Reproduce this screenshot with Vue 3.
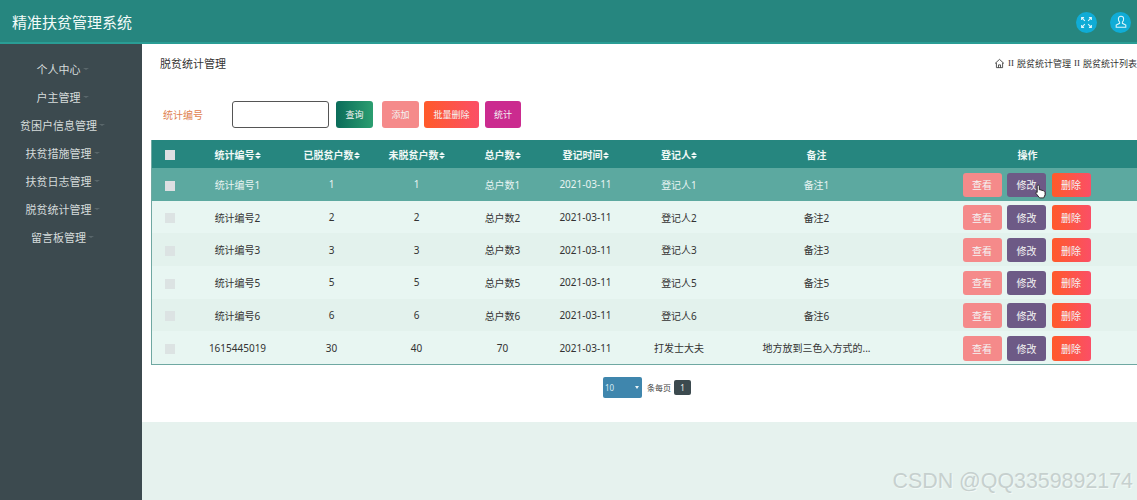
<script setup>
// 侧边栏菜单
const menus = ["个人中心", "户主管理", "贫困户信息管理", "扶贫措施管理", "扶贫日志管理", "脱贫统计管理", "留言板管理"];

const columns = ["统计编号", "已脱贫户数", "未脱贫户数", "总户数", "登记时间", "登记人"];

const rows = [
  { code: "统计编号1", done: 1, todo: 1, total: "总户数1", date: "2021-03-11", person: "登记人1", note: "备注1" },
  { code: "统计编号2", done: 2, todo: 2, total: "总户数2", date: "2021-03-11", person: "登记人2", note: "备注2" },
  { code: "统计编号3", done: 3, todo: 3, total: "总户数3", date: "2021-03-11", person: "登记人3", note: "备注3" },
  { code: "统计编号5", done: 5, todo: 5, total: "总户数5", date: "2021-03-11", person: "登记人5", note: "备注5" },
  { code: "统计编号6", done: 6, todo: 6, total: "总户数6", date: "2021-03-11", person: "登记人6", note: "备注6" },
  { code: "1615445019", done: 30, todo: 40, total: 70, date: "2021-03-11", person: "打发士大夫", note: "地方放到三色入方式的..." },
];
</script>

<template>
  <div class="page">
    <header class="topbar">
      <div class="brand">精准扶贫管理系统</div>
      <div class="top-icons">
        <span class="round-icon">
          <svg viewBox="0 0 16 16" width="13" height="13" fill="none" stroke="#dff6fb" stroke-width="1.3">
            <path d="M6 6 2 2M2 5V2h3M10 6l4-4M11 2h3v3M6 10l-4 4M2 11v3h3M10 10l4 4M14 11v3h-3" />
          </svg>
        </span>
        <span class="round-icon">
          <svg viewBox="0 0 16 16" width="14" height="14" fill="none" stroke="#dff6fb" stroke-width="1.2">
            <path d="M8 1.5c-2 0-3 1.5-3 3.2 0 1.5.6 2.7 1.4 3.5v1.3L2.5 11.5v2.5h11v-2.5L9.600 9.500V8.200c.8-.8 1.400-2 1.400-3.500 0-1.700-1-3.200-3-3.200z" />
          </svg>
        </span>
      </div>
    </header>

    <div class="body">
      <aside class="sidebar">
        <div v-for="m in menus" :key="m" class="menu-item">
          <span class="menu-text">{{ m }}<i class="caret"></i></span>
        </div>
      </aside>

      <main class="content">
        <section class="panel">
          <div class="crumb-row">
            <span class="page-title">脱贫统计管理</span>
            <span class="crumbs">
              <svg viewBox="0 0 16 16" width="11" height="11" fill="none" stroke="#333" stroke-width="1.200">
                <path d="M1.500 8 8 2l6.500 6M3.500 7v7h9V7M6.500 14v-4h3v4" />
              </svg>
              <span class="crumb-sep">II</span>
              <span>脱贫统计管理</span>
              <span class="crumb-sep">II</span>
              <span>脱贫统计列表</span>
            </span>
          </div>

          <div class="search-row">
            <label class="search-label">统计编号</label>
            <input class="search-input" type="text" />
            <button class="btn btn-query">查询</button>
            <button class="btn btn-add">添加</button>
            <button class="btn btn-batch">批量删除</button>
            <button class="btn btn-stat">统计</button>
          </div>

          <table class="grid">
            <colgroup>
              <col style="width: 36px" />
              <col style="width: 100px" />
              <col style="width: 88px" />
              <col style="width: 82px" />
              <col style="width: 90px" />
              <col style="width: 76px" />
              <col style="width: 111px" />
              <col style="width: 164px" />
              <col style="width: 258px" />
            </colgroup>
            <thead>
              <tr>
                <th><span class="check head-check"></span></th>
                <th v-for="c in columns" :key="c">
                  {{ c }}<span class="sort"><i class="up"></i><i class="down"></i></span>
                </th>
                <th>备注</th>
                <th>操作</th>
              </tr>
            </thead>
            <tbody>
              <tr v-for="(r, i) in rows" :key="r.code" :class="{ hover: i === 0, alt: i % 2 === 0 }">
                <td><span class="check"></span></td>
                <td>{{ r.code }}</td>
                <td>{{ r.done }}</td>
                <td>{{ r.todo }}</td>
                <td>{{ r.total }}</td>
                <td>{{ r.date }}</td>
                <td>{{ r.person }}</td>
                <td>{{ r.note }}</td>
                <td>
                  <div class="ops">
                    <button class="op op-view">查看</button>
                    <button class="op op-edit">修改</button>
                    <button class="op op-del">删除</button>
                  </div>
                </td>
              </tr>
            </tbody>
          </table>

          <div class="pager">
            <div class="page-size">10<i class="size-arrow"></i></div>
            <span class="per-page">条每页</span>
            <span class="page-no">1</span>
          </div>
        </section>
      </main>
    </div>

    <!-- 鼠标指针 -->
    <svg class="cursor" viewBox="0 0 12 16" width="11" height="15">
      <path d="M3.500 1c.8 0 1.200.5 1.200 1.200v4l.6-.2 4.200 1.300c1 .3 1.500 1 1.500 2v2.200L9.500 15H5L1 10c-.5-.8.300-1.600 1.200-1.100l.2.100V2.200C2.400 1.500 2.800 1 3.500 1z" fill="#fff" stroke="#222" stroke-width="1" />
    </svg>

    <div class="watermark">CSDN @QQ3359892174</div>
  </div>
</template>

<style>
html,
body {
  margin: 0;
  overflow: hidden;
}
</style>

<style scoped>
.page {
  position: relative;
  width: 1137px;
  height: 500px;
  overflow: hidden;
  display: flex;
  flex-direction: column;
  font-family: "Noto Sans", "Noto Sans CJK SC", sans-serif;
  font-size: 10px;
  color: #333;
}

/* 顶部栏 */
.topbar {
  height: 40px;
  flex-shrink: 0;
  background: #26867f;
  border-bottom: 2px solid #2a9d95;
  display: flex;
  align-items: center;
  justify-content: space-between;
  padding: 2px 6px 0 12px;
}

.brand {
  font-size: 15px;
  line-height: 20px;
  color: #f2fbf9;
}

.top-icons {
  display: flex;
  gap: 13px;
}

.round-icon {
  width: 21px;
  height: 21px;
  border-radius: 50%;
  background: #10acd6;
  display: flex;
  align-items: center;
  justify-content: center;
}

.body {
  flex: 1;
  display: flex;
  min-height: 0;
}

/* 侧边栏 */
.sidebar {
  width: 142px;
  flex-shrink: 0;
  background: #3c4a4f;
  padding-top: 11px;
  box-sizing: border-box;
}

.menu-item {
  height: 28px;
  width: 117px;
  display: flex;
  align-items: center;
  justify-content: center;
  font-size: 11px;
  color: #d6dcdc;
}

.menu-text {
  position: relative;
}

.caret {
  position: absolute;
  left: 100%;
  top: 7px;
  margin-left: 2px;
  border: 3px solid transparent;
  border-top: 2px solid #5a676b;
}

/* 内容区 */
.content {
  flex: 1;
  min-width: 0;
  background: #e6f2ee;
}

.panel {
  height: 378px;
  background: #fff;
  padding: 0 0 0 9px;
  box-sizing: border-box;
}

.crumb-row {
  height: 57px;
  display: flex;
  align-items: center;
  justify-content: space-between;
  padding: 0 0 19px 9px;
  box-sizing: border-box;
}

.page-title {
  font-size: 11px;
  color: #333;
}

.crumbs {
  display: flex;
  align-items: center;
  gap: 3px;
  font-size: 9px;
  color: #333;
  white-space: nowrap;
}

.crumb-sep {
  font-family: "Liberation Serif", serif;
}

.search-row {
  display: flex;
  align-items: center;
  height: 27px;
}

.search-label {
  width: 81px;
  padding-left: 12px;
  box-sizing: border-box;
  font-size: 10px;
  color: #e0814f;
}

.search-input {
  width: 97px;
  height: 27px;
  box-sizing: border-box;
  border: 1px solid #555;
  border-radius: 3px;
  background: #fff;
  margin: 0 7px 0 0;
}

.btn {
  height: 27px;
  border: none;
  border-radius: 3px;
  color: #f4f4f4;
  font-family: inherit;
  font-size: 9px;
  padding: 0;
}

.btn-query {
  width: 37px;
  background: linear-gradient(90deg, #0b6c5a, #2b9e70);
  margin-right: 9px;
}

.btn-add {
  width: 37px;
  background: #f58a8a;
  margin-right: 5px;
}

.btn-batch {
  width: 55px;
  background: linear-gradient(90deg, #ff5a2a, #fb4f66);
  margin-right: 6px;
}

.btn-stat {
  width: 36px;
  background: #cb2b8f;
}

/* 表格 */
.grid {
  margin-top: 12px;
  width: 1005px;
  table-layout: fixed;
  border-collapse: collapse;
  border-left: 1px solid #6fa8a2;
  border-bottom: 1px solid #6fa8a2;
  font-size: 10px;
}

.grid th {
  height: 28px;
  padding: 0;
  background: #26867f;
  color: #f0f8f6;
  font-weight: 700;
  text-align: center;
}

.grid td {
  height: 32.7px;
  padding: 0;
  text-align: center;
  color: #333;
  background: #e8f6f2;
}

.grid tr.alt td {
  background: #e3f2ed;
}

.grid tr.hover td {
  background: #5ca9a0;
  color: #e8f4f2;
}

.check {
  display: inline-block;
  width: 10px;
  height: 10px;
  vertical-align: middle;
  background: #dce3e3;
}

.head-check,
.hover .check {
  background: #dcdfe2;
}

.sort {
  display: inline-flex;
  flex-direction: column;
  vertical-align: middle;
}

.sort i {
  display: block;
  border-left: 3px solid transparent;
  border-right: 3px solid transparent;
}

.sort .up {
  border-bottom: 3px solid #f0f8f6;
  margin-bottom: 1px;
}

.sort .down {
  border-top: 3px solid #f0f8f6;
}

.ops {
  display: flex;
  gap: 5.5px;
  padding: 1px 0 0 64px;
}

.op {
  width: 39px;
  height: 24.5px;
  border: none;
  border-radius: 3px;
  padding: 0;
  color: #f4f4f4;
  font-family: inherit;
  font-size: 10px;
}

.op-view {
  background: #f58a8a;
}

.op-edit {
  background: #6d5a86;
}

.op-del {
  background: linear-gradient(90deg, #ff5a2a, #fb4f66);
}

/* 分页 */
.pager {
  display: flex;
  align-items: center;
  margin-top: 12px;
  padding-left: 452px;
}

.page-size {
  position: relative;
  width: 39px;
  height: 21px;
  box-sizing: border-box;
  padding-left: 2px;
  line-height: 21px;
  border-radius: 2px;
  background: #3f86ad;
  color: #d8ecf4;
  font-size: 8px;
}

.size-arrow {
  position: absolute;
  right: 3px;
  top: 9px;
  border: 2px solid transparent;
  border-top: 3px solid #e8f4f8;
}

.per-page {
  margin-left: 5px;
  font-size: 8px;
  color: #444;
}

.page-no {
  width: 17px;
  height: 15px;
  margin-left: 3px;
  border-radius: 2px;
  background: #3c4a4f;
  color: #f0f0f0;
  font-size: 8px;
  line-height: 15px;
  text-align: center;
}

.cursor {
  position: absolute;
  left: 1035px;
  top: 184px;
}

.watermark {
  position: absolute;
  right: 4px;
  top: 469px;
  font-family: "Liberation Sans", sans-serif;
  font-size: 21.4px;
  color: #c6d0ce;
  text-shadow: 1px 1px 0 #f2f9f7;
  white-space: nowrap;
}
</style>
